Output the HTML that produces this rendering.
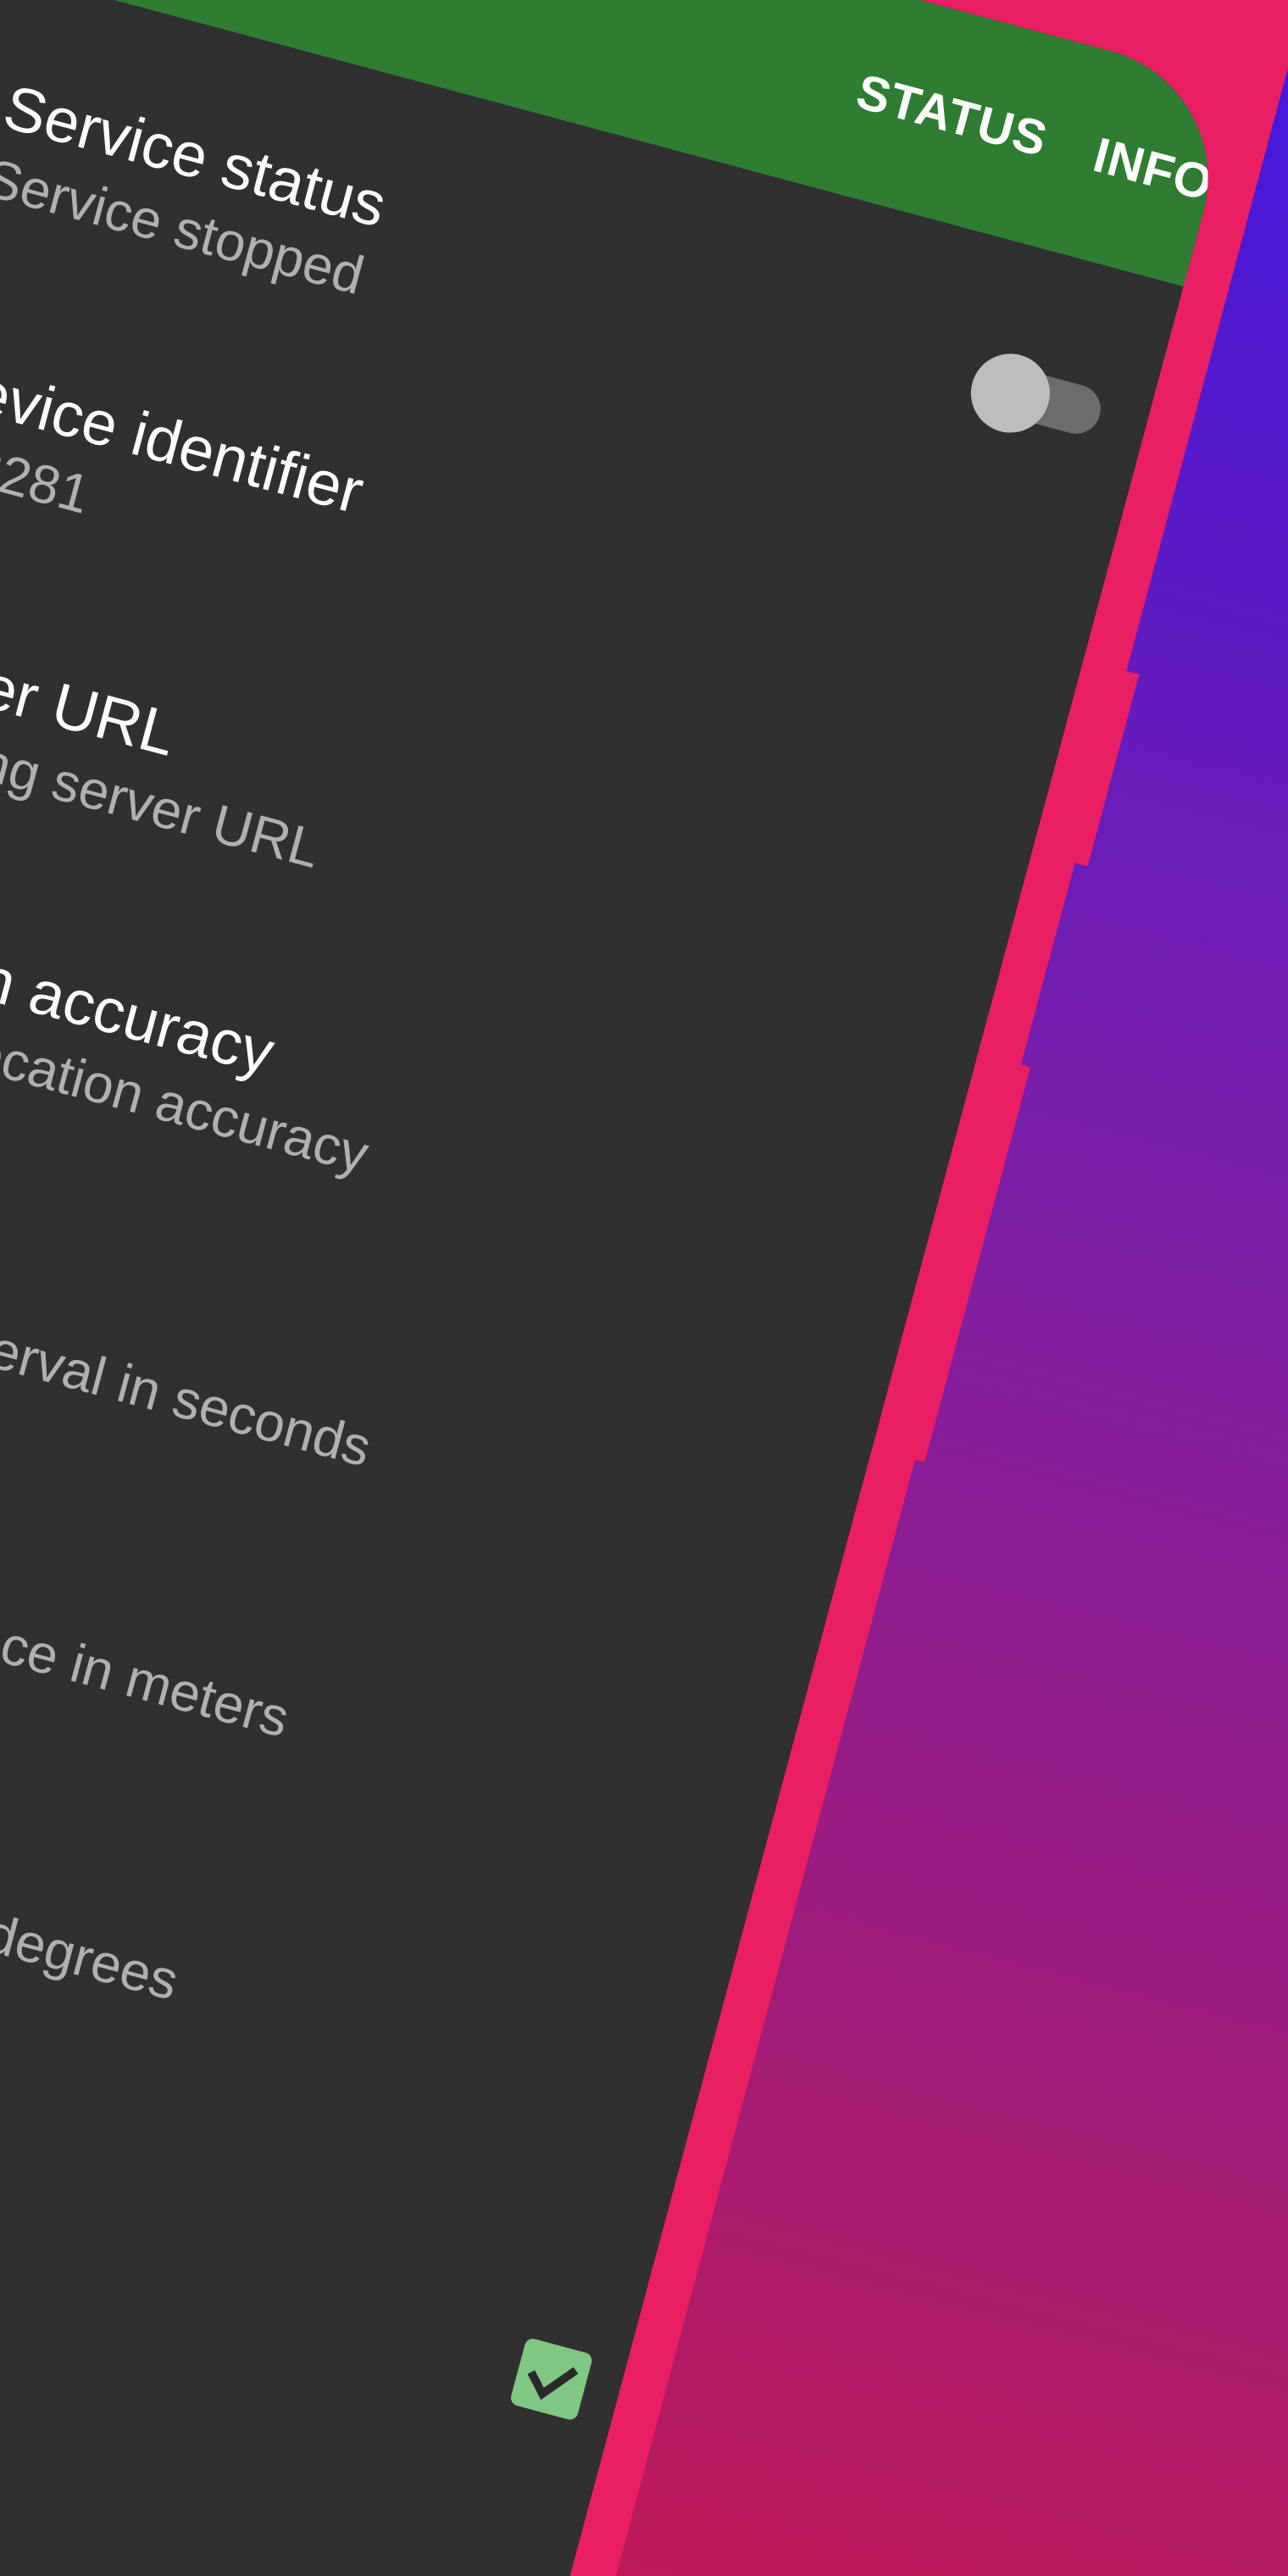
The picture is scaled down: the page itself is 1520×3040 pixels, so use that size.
<!DOCTYPE html>
<html><head><meta charset="utf-8"><style>
html,body{margin:0;padding:0;width:1520px;height:3040px;overflow:hidden;background:#303030}
svg{display:block}
text{font-family:"Liberation Sans",sans-serif}
</style></head><body>
<svg width="1520" height="3040" viewBox="0 0 784 1568" xmlns="http://www.w3.org/2000/svg" overflow="hidden">
<defs>
<linearGradient id="bg" x1="784" y1="0" x2="380" y2="1568" gradientUnits="userSpaceOnUse">
<stop offset="0" stop-color="#4117e0"/>
<stop offset="0.45" stop-color="#7a1ea6"/>
<stop offset="1" stop-color="#bc1a58"/>
</linearGradient>
<clipPath id="scr"><rect x="-1200" y="-145" width="1941" height="3200" rx="80"/></clipPath>
</defs>
<rect width="784" height="1568" fill="url(#bg)"/>
<g transform="rotate(15)">
<rect x="-1200" y="-280" width="1968" height="3400" rx="100" fill="#e91e63"/>
<rect x="760" y="217" width="16" height="121" fill="#e91e63"/>
<rect x="760" y="465" width="14" height="249" fill="#e91e63"/>
<g clip-path="url(#scr)">
<rect x="-1200" y="-145" width="1941" height="3200" fill="#303030"/>
<rect x="-1200" y="-145" width="1941" height="127" fill="#2e7d32"/>
<text x="578" y="-72" fill="#fff" font-size="30" font-weight="600" text-anchor="middle" letter-spacing="0.5">STATUS</text>
<text x="668" y="-72" fill="#fff" font-size="30" font-weight="600" letter-spacing="0.5">INFO</text>
<g font-size="38" fill="#fff">
<text x="20" y="74">Service status</text>
<text x="20" y="246">Device identifier</text>
<text x="20" y="418">Server URL</text>
<text x="20" y="590">Location accuracy</text>
<text x="20" y="762">Interval</text>
<text x="20" y="934">Distance</text>
<text x="20" y="1106">Angle</text>
<text x="20" y="1324">Offline buffering</text>
</g>
<g font-size="33" fill="#b0b0b0">
<text x="20" y="117">Service stopped</text>
<text x="20" y="289">123281</text>
<text x="20" y="461">Tracking server URL</text>
<text x="20" y="633">Desired location accuracy</text>
<text x="20" y="805">Reporting interval in seconds</text>
<text x="20" y="977">Reporting distance in meters</text>
<text x="20" y="1149">Reporting angle in degrees</text>
</g>
<rect x="652" y="56" width="60" height="30" rx="15" fill="#6c6c6c"/>
<circle cx="656" cy="72" r="24" fill="#bdbdbd"/>
<rect x="678" y="1291" width="42" height="42" rx="5" fill="#81c784"/>
<path d="M686 1311 L696 1322 L712 1303" stroke="#2a2a2a" stroke-width="5" fill="none"/>
</g>
</g>
</svg>
</body></html>
